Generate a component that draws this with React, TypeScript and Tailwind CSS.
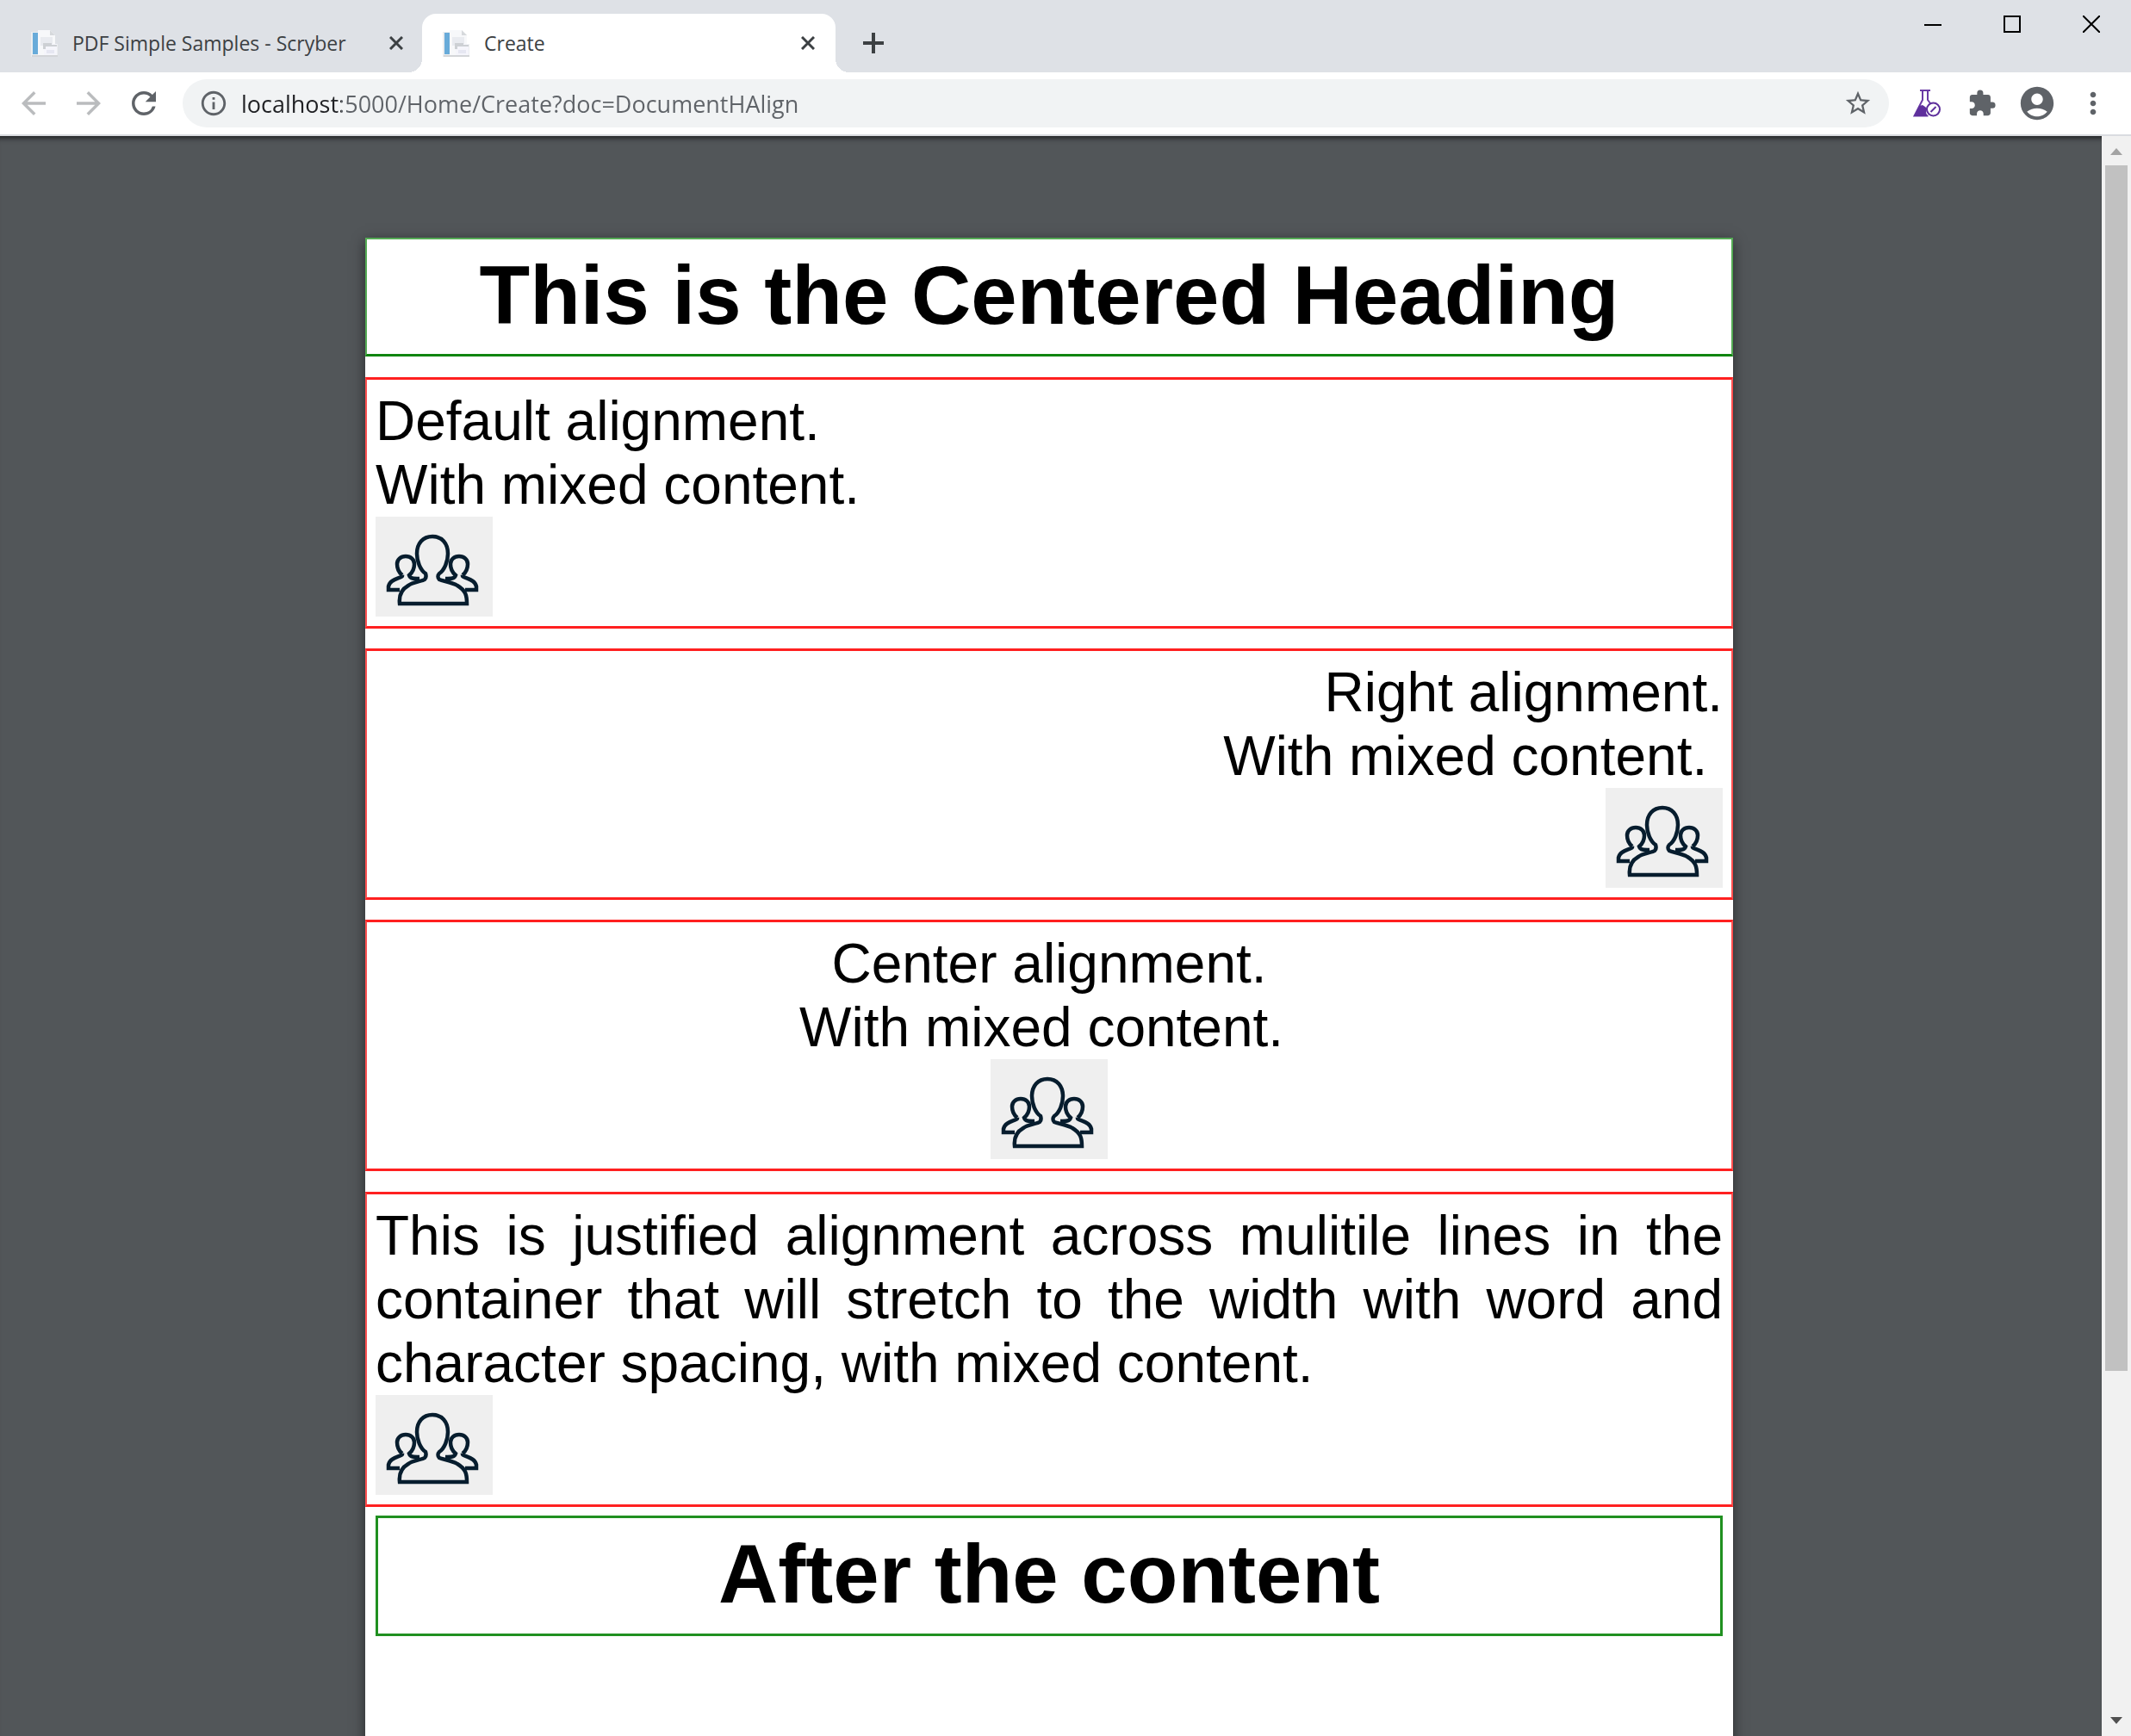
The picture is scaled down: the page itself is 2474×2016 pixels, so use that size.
import type { ReactNode } from 'react'
import {
  MdAccountCircle,
  MdArrowBack,
  MdArrowForward,
  MdExtension,
  MdInfoOutline,
  MdMoreVert,
  MdRefresh,
  MdStarBorder,
} from 'react-icons/md'

function Favicon() {
  return (
    <svg className="h-8 w-8 shrink-0" viewBox="0 0 32 32" aria-hidden="true">
      <path d="M0 3h8V1h14l6 6v10h3v15H0z" fill="#eceef0" />
      <path d="M2 4h6v25H2z" fill="#68abd9" />
      <path d="M8 1h14l6 6v24H8z" fill="#f7f8fa" />
      <path d="M11 9h14v10H11z" fill="#e9ebf0" />
      <path d="M22 1v6h6z" fill="#d6d9dc" />
      <path d="M15 17h15v14H15z" fill="#f5f5fb" />
      <path d="M14 16h10v2h6v2H17v3h-3z" fill="#cdd0d4" />
      <path d="M18 24h9v4h-9z" fill="#e6e7f2" />
      <path d="M1 30h30v2H1z" fill="#d3d5d8" />
    </svg>
  )
}

function Cross() {
  return (
    <svg className="h-4 w-4" viewBox="0 0 16 16" aria-hidden="true">
      <path d="M1 1l14 14M15 1L1 15" stroke="#3c4043" strokeWidth="3" />
    </svg>
  )
}

function Flask() {
  return (
    <svg className="h-8 w-8" viewBox="0 0 32 32" aria-hidden="true">
      <path d="M8 1h12M11 1v11L1.500 30.500h16M17 1v11l3 4" fill="none" stroke="#6a3aa5" strokeWidth="2" />
      <path d="M7 19l4-1 3 2 2 2-1 5 2 4H1z" fill="#5e2f9c" />
      <circle cx="23.500" cy="23" r="7.500" fill="#fff" stroke="#5e2f9c" strokeWidth="2" />
      <path d="M20.500 26l6-6" stroke="#5e2f9c" strokeWidth="2" />
    </svg>
  )
}

function People() {
  return (
    <svg
      role="img"
      aria-label="Group of people"
      className="inline-block h-[116px] w-[136px] bg-[#efefef] align-top"
      viewBox="0 0 136 116"
      fill="none"
      stroke="#071d2e"
      strokeWidth="4.5"
    >
      <path d="M58 66c1 3 1 5-1 7-3 2-14 3-19 7-9 5-11 12-10 21h78c0-9-1-15-11-21-6-4-16-5-21-7-2-2-2-5 0-7 6-4 10-14 10-23 0-12-7-20-18-20s-18 8-18 20c0 9 4 19 10 23z" />
      <path d="M31 68c-5-4-6-9-6-13 0-5 4-9 10-9s10 4 10 9c0 4-1 9-6 13 1 4 5 4 12 4" />
      <path d="M31 68c1 4-14 3-16 13v4h13" />
      <path d="M101 68c5-4 6-9 6-13 0-5-4-9-10-9s-10 4-10 9c0 4 1 9 6 13-1 4-5 4-12 4" />
      <path d="M101 68c-1 4 14 3 16 13v4h-13" />
    </svg>
  )
}

function WindowButton({ label, children }: { label: string; children: ReactNode }) {
  return (
    <button type="button" aria-label={label} className="flex h-14 w-[92px] items-center justify-center">
      <svg className="h-5 w-5" viewBox="0 0 20 20" fill="none" stroke="#000" strokeWidth="2" aria-hidden="true">
        {children}
      </svg>
    </button>
  )
}

function TabBar() {
  return (
    <header className="flex h-[84px] shrink-0 bg-[#dee1e6] text-[#3c4043]">
      <div role="tablist" className="flex pt-4">
        <div role="tab" aria-selected="false" className="flex w-[490px] items-center pr-[22px] pl-9">
          <Favicon />
          <span className="ml-4 flex-1 text-[23px] whitespace-nowrap">PDF Simple Samples - Scryber</span>
          <button type="button" aria-label="Close PDF Simple Samples">
            <Cross />
          </button>
        </div>
        <div
          role="tab"
          aria-selected="true"
          className="relative flex w-[480px] items-center rounded-t-2xl bg-white pr-6 pl-6"
        >
          <span className="absolute bottom-0 -left-4 h-4 w-4 bg-[radial-gradient(circle_at_0_0,transparent_16px,white_16px)]" />
          <span className="absolute -right-4 bottom-0 h-4 w-4 bg-[radial-gradient(circle_at_100%_0,transparent_16px,white_16px)]" />
          <Favicon />
          <span className="ml-4 flex-1 text-[23px]">Create</span>
          <button type="button" aria-label="Close Create">
            <Cross />
          </button>
        </div>
        <button type="button" aria-label="New tab" className="ml-8">
          <svg className="h-6 w-6" viewBox="0 0 24 24" aria-hidden="true">
            <path d="M12 0v24M0 12h24" stroke="#3c4043" strokeWidth="4" />
          </svg>
        </button>
      </div>
      <div className="ml-auto flex">
        <WindowButton label="Minimize">
          <path d="M0 11h20" />
        </WindowButton>
        <WindowButton label="Maximize">
          <path d="M1 1h18v18H1z" />
        </WindowButton>
        <WindowButton label="Close window">
          <path d="M0 0l20 20M20 0L0 20" />
        </WindowButton>
      </div>
    </header>
  )
}

function Toolbar() {
  return (
    <nav className="flex h-[74px] shrink-0 items-center border-b-2 border-[#dadce0] bg-white pr-6 pl-[18px] text-[#5f6368]">
      <button type="button" aria-label="Back" className="text-[#babcbe]">
        <MdArrowBack size={42} />
      </button>
      <button type="button" aria-label="Forward" className="ml-[22px] text-[#babcbe]">
        <MdArrowForward size={42} />
      </button>
      <button type="button" aria-label="Reload" className="ml-[22px]">
        <MdRefresh size={42} />
      </button>
      <div className="ml-6 flex h-14 flex-1 items-center rounded-full bg-[#f1f3f4] px-[19px]">
        <button type="button" aria-label="View site information">
          <MdInfoOutline size={34} />
        </button>
        <input
          type="text"
          aria-label="Address"
          defaultValue="localhost:5000/Home/Create?doc=DocumentHAlign"
          className="ml-[15px] h-12 min-w-0 flex-1 bg-[linear-gradient(90deg,#202124_116px,#5f6368_116px)] bg-clip-text text-[27px] text-transparent outline-none"
        />
        <button type="button" aria-label="Bookmark this page">
          <MdStarBorder size={34} />
        </button>
      </div>
      <button type="button" aria-label="Experiments" className="ml-7">
        <Flask />
      </button>
      <button type="button" aria-label="Extensions" className="ml-[31px]">
        <MdExtension size={34} />
      </button>
      <button type="button" aria-label="Profile" className="ml-6">
        <MdAccountCircle size={46} />
      </button>
      <button type="button" aria-label="Menu" className="ml-[22px]">
        <MdMoreVert size={40} />
      </button>
    </nav>
  )
}

function Panel({ className, children }: { className: string; children: ReactNode }) {
  return (
    <section
      className={`border-x-2 border-y-[3px] border-x-[#ff5050] border-y-[#ff2020] px-[10px] py-[11px] text-[64px] leading-[74px] ${className}`}
    >
      {children}
    </section>
  )
}

function Document() {
  return (
    <article className="mx-auto w-[1588px] max-w-full bg-white pb-[200px] font-['Liberation_Sans',Arial,sans-serif] text-black shadow-[0_4px_14px_rgba(0,0,0,0.5)]">
      <h1 className="border-2 border-b-[3px] border-[#55ab55] border-b-[#108510] pt-[10px] pb-[13px] text-center text-[96px] leading-[110px] font-bold">
        This is the Centered Heading
      </h1>
      <Panel className="mt-6">
        <p>Default alignment.</p>
        <p>With mixed content.</p>
        <People />
      </Panel>
      <Panel className="mt-[23px] text-right">
        <p>Right alignment.</p>
        <p>With mixed content.&nbsp;</p>
        <People />
      </Panel>
      <Panel className="mt-[23px] text-center">
        <p>Center alignment.</p>
        <p>With mixed content.&nbsp;</p>
        <People />
      </Panel>
      <Panel className="mt-6">
        <p className="text-justify">
          This is justified alignment across mulitile lines in the container that will stretch to the width with word
          and character spacing, with mixed content.
        </p>
        <People />
      </Panel>
      <h1 className="mx-3 mt-[10px] border-[3px] border-[#209020] pt-[10px] pb-[14px] text-center text-[96px] leading-[110px] font-bold">
        After the content
      </h1>
    </article>
  )
}

function Scrollbar() {
  return (
    <div className="flex w-[34px] shrink-0 flex-col items-center bg-[#f1f1f1] py-[14px]" aria-hidden="true">
      <svg className="h-2 w-[14px] shrink-0" viewBox="0 0 14 8">
        <path d="M0 8l7-8 7 8z" fill="#a3a3a3" />
      </svg>
      <div className="mt-3 mb-auto h-[76.5%] w-[26px] bg-[#c1c1c1]" />
      <svg className="h-2 w-[14px] shrink-0" viewBox="0 0 14 8">
        <path d="M0 0h14l-7 8z" fill="#505050" />
      </svg>
    </div>
  )
}

export default function App() {
  return (
    <div className="flex h-screen flex-col overflow-hidden font-['Open_Sans','Noto_Sans',sans-serif]">
      <TabBar />
      <Toolbar />
      <div className="flex min-h-0 flex-1">
        <main className="min-w-0 flex-1 overflow-hidden bg-[#525659] pt-[118px] pr-1 shadow-[inset_0_8px_6px_-6px_rgba(0,0,0,0.7)]">
          <Document />
        </main>
        <Scrollbar />
      </div>
    </div>
  )
}
